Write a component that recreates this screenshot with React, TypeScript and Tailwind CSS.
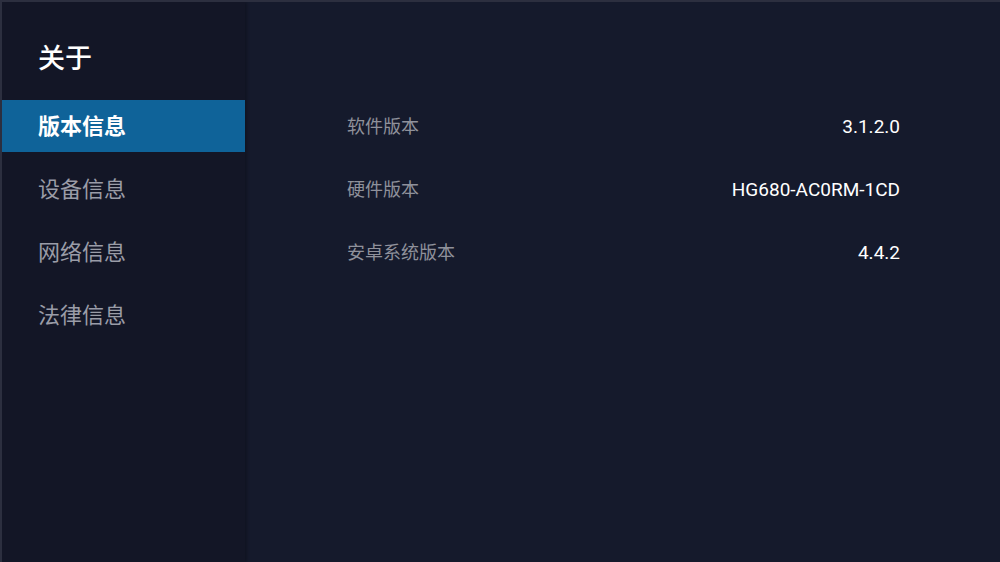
const menu = ["版本信息", "设备信息", "网络信息", "法律信息"];

const rows = [
  { label: "软件版本", value: "3.1.2.0" },
  { label: "硬件版本", value: "HG680-AC0RM-1CD" },
  { label: "安卓系统版本", value: "4.4.2" },
];

const cjk = "font-['Noto_Sans_CJK_SC','Noto_Sans',sans-serif]";

export default function App() {
  return (
    <div className="flex h-[562px] w-[1000px] overflow-hidden border-t-2 border-l-2 border-[#2c2f3f] bg-[#151a2c]">
      <aside className="flex w-[243px] shrink-0 flex-col bg-[#131626] shadow-[2px_0_3px_rgba(0,0,0,0.25)]">
        <h1 className={`${cjk} ml-[36px] mt-[36px] h-[62px] text-[27px] font-medium leading-[38px] text-white`}>
          关于
        </h1>
        <nav className="flex flex-col">
          {menu.map((item, i) => (
            <div
              key={item}
              className={`${cjk} flex h-[52px] items-center pb-[4px] pl-[36px] text-[22px] ${
                i === 0 ? "bg-[#0f6399] font-bold text-white" : "text-[#9a9ca7]"
              } ${i > 0 ? "mt-[11px]" : ""}`}
            >
              {item}
            </div>
          ))}
        </nav>
      </aside>
      <main className="flex flex-1 flex-col pl-[102px] pr-[100px] pt-[94px]">
        {rows.map((row) => (
          <div key={row.label} className="flex h-[63px] items-center justify-between">
            <span className={`${cjk} mb-[4px] text-[18px] text-[#8f919b]`}>{row.label}</span>
            <span className="font-['Roboto',sans-serif] text-[19px] text-white">{row.value}</span>
          </div>
        ))}
      </main>
    </div>
  );
}
